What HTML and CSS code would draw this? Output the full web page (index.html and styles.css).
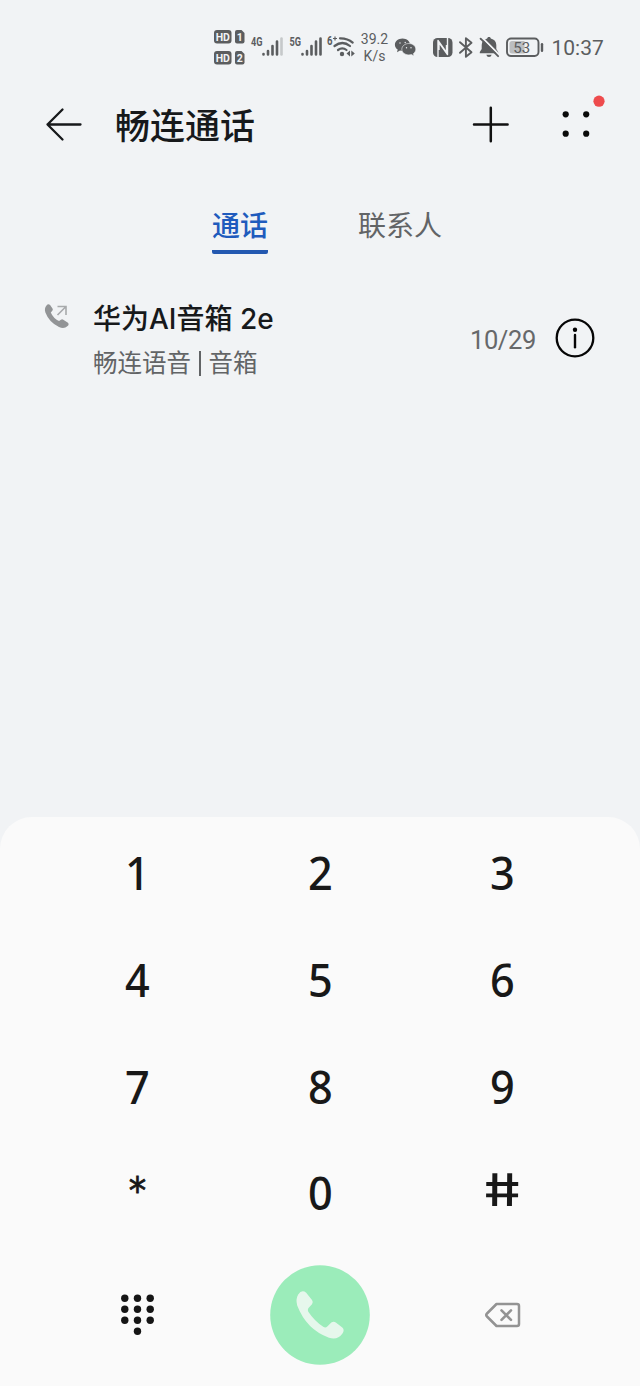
FILE: index.html
```html
<!DOCTYPE html>
<html lang="zh-CN">
<head>
<meta charset="utf-8">
<title>畅连通话</title>
<link rel="stylesheet" href="styles.css">
</head>
<body>
<div class="screen">
  <header class="status">
    <svg class="glyph" width="38" height="48" viewBox="210 24 38 48">
      <g fill="#5b5d5f">
        <rect x="214" y="30" width="17.500" height="13.500" rx="3"/>
        <path d="M237 30h4.500l3 3v8.500a2 2 0 0 1-2 2H237a2 2 0 0 1-2-2V32a2 2 0 0 1 2-2z"/>
        <rect x="214" y="51" width="17.500" height="13.500" rx="3"/>
        <path d="M237 51h4.500l3 3v8.500a2 2 0 0 1-2 2H237a2 2 0 0 1-2-2V53a2 2 0 0 1 2-2z"/>
      </g>
      <g class="tiny light">
        <text x="222.800" y="40.700">HD</text><text x="239.800" y="40.700">1</text>
        <text x="222.800" y="61.700">HD</text><text x="239.800" y="61.700">2</text>
      </g>
    </svg>
    <svg class="glyph" width="38" height="48" viewBox="248 24 38 48">
      <text class="net" x="251" y="46" textLength="11.500" lengthAdjust="spacingAndGlyphs">4G</text>
      <g stroke="#5b5d5f" stroke-width="2.600" stroke-linecap="round"><path d="M263.500 54v.5M268 51v3.500M272.500 46v8.500M277 41.500v13"/><path stroke="#c6c8ca" d="M281.500 38.500v16"/></g>
    </svg>
    <svg class="glyph" width="39" height="48" viewBox="286 24 39 48">
      <text class="net" x="289.500" y="46" textLength="11.500" lengthAdjust="spacingAndGlyphs">5G</text>
      <path stroke="#5b5d5f" stroke-width="2.600" stroke-linecap="round" d="M302.500 54v.5M307 51v3.500M311.500 46v8.500M316 41.500v13M320.500 38.500v16"/>
    </svg>
    <svg class="glyph" width="33" height="48" viewBox="325 24 33 48">
      <text class="net" x="327" y="45" textLength="5.500" lengthAdjust="spacingAndGlyphs">6</text>
      <path d="M333 38.500h4M335 36.500v4" stroke="#5b5d5f" stroke-width="1.200"/>
      <g fill="none" stroke="#5b5d5f" stroke-width="2.200" stroke-linecap="round"><path d="M340 38.300q7.500-.2 12.700 4.300M334.500 46q8-6 15.500 0M338 50q4.300-3.200 8.500 0"/></g>
      <circle cx="342" cy="54" r="2.200" fill="#5b5d5f"/>
      <path d="M350 50.500v6l-3.500-3zM351.300 50.500v6l3.500-3z" fill="#5b5d5f"/>
    </svg>
    <div class="speed"><span>39.2</span><span>K/s</span></div>
    <svg class="glyph" width="32" height="48" viewBox="391 24 32 48">
      <path fill="#5b5d5f" d="M402.500 38.500c4.300 0 7.500 2.800 7.500 6.200s-3.200 6.200-7.500 6.200c-.9 0-1.700-.1-2.500-.3l-3 1.700.7-2.700c-1.700-1.200-2.800-2.900-2.800-4.900 0-3.400 3.300-6.200 7.600-6.200z"/>
      <path fill="#5b5d5f" stroke="#f1f3f5" stroke-width=".6" d="M408.800 43.500c4.200 0 7 2.600 7 5.700 0 1.800-1 3.300-2.400 4.400l.6 2.300-2.600-1.400c-.8.200-1.700.4-2.600.4-3.900 0-7-2.600-7-5.700s3.100-5.700 7-5.700z"/>
      <g fill="#f1f3f5"><circle cx="400" cy="43" r=".7"/><circle cx="405.200" cy="42.500" r=".7"/><circle cx="406.500" cy="47.700" r=".7"/><circle cx="411" cy="47.700" r=".7"/></g>
    </svg>
    <svg class="glyph" width="32" height="48" viewBox="423 24 32 48">
      <rect x="433" y="38" width="19.500" height="19" rx="4.500" fill="#5b5d5f"/>
      <g fill="none" stroke="#f1f3f5" stroke-width="1.400" stroke-linejoin="round"><path d="M438 57V40.500l8.500 12v-7.500M447.500 38v16.500l-8.500-12v7.500"/></g>
    </svg>
    <svg class="glyph" width="21" height="48" viewBox="455 24 21 48">
      <path d="M460 42.200l11.500 10-5.600 4.600V38.200l5.600 4.600-11.500 10" fill="none" stroke="#5b5d5f" stroke-width="1.900" stroke-linejoin="round" stroke-linecap="round"/>
    </svg>
    <svg class="glyph" width="27" height="48" viewBox="476 24 27 48">
      <path fill="#5b5d5f" d="M489 37c1.200 0 1.700.7 1.800 1.400 3.500.8 5.500 3.300 5.500 6.600v4l1.900 3v1.200h-18.400V52l1.900-3v-4c0-3.300 2-5.800 5.500-6.600.1-.7.600-1.400 1.800-1.400zM486.300 54.800h5.400q-.6 2.200-2.700 2.200t-2.700-2.200z"/>
      <path d="M482 37.500L499.500 55" stroke="#f1f3f5" stroke-width="1.800"/><path d="M480.600 38.700l17.500 17.500" stroke="#5b5d5f" stroke-width="1.900" stroke-linecap="round"/>
    </svg>
    <svg class="glyph" width="45" height="48" viewBox="503 24 45 48">
      <rect x="507" y="38.500" width="31.500" height="17.500" rx="4" fill="none" stroke="#5b5d5f" stroke-width="1.900"/>
      <path d="M512 41h12.500v12.500H512a2.500 2.500 0 0 1-2.500-2.500v-7.500a2.500 2.500 0 0 1 2.500-2.500z" fill="#bcbec0"/>
      <path d="M542 44.200v6.500" stroke="#5b5d5f" stroke-width="2.400" stroke-linecap="round"/>
      <text class="battery" x="521.800" y="52.700">53</text>
    </svg>
    <time class="clock">10:37</time>
  </header>

  <nav class="appbar">
    <svg class="back" width="38" height="36" viewBox="45 106 38 36"><path d="M62.500 109.500L47.500 124.500l15 15M47.500 124.500H80.500" fill="none" stroke="#17191b" stroke-width="2.300" stroke-linecap="round" stroke-linejoin="round"/></svg>
    <h1 class="title">畅连通话</h1>
    <svg class="add" width="40" height="40" viewBox="471 104 40 40"><path d="M490.800 107.700v33.600M474 124.500h33.600" stroke="#111" stroke-width="2.500" stroke-linecap="round"/></svg>
    <svg class="more" width="50" height="52" viewBox="558 92 50 52"><g fill="#0a0a0a"><circle cx="565.700" cy="114.300" r="3.100"/><circle cx="586.200" cy="114.300" r="3.100"/><circle cx="565.700" cy="133.700" r="3.100"/><circle cx="586.200" cy="133.700" r="3.100"/></g><circle cx="599" cy="101.200" r="5.600" fill="#ee4b4d"/></svg>
  </nav>

  <div class="tabs">
    <span class="tab active">通话</span>
    <span class="tab">联系人</span>
  </div>

  <main class="log">
    <div class="entry">
      <svg class="outgoing" width="28" height="28" viewBox="43 302 28 28">
        <path fill="#929496" d="M46.500 305.500q1.700-2.300 3.600-.4l2.400 3.300q.8 1.300-.2 2.300l-1.500 1.700q2.400 5.700 8.300 8.700l1.800-1.300q1.200-.9 2.400 0l4.300 2.600q2 1.600 0 3.600-3.600 3.300-8.600.9-9.800-4.400-13.600-14.400-1.400-4.200 1.100-7z"/>
        <path d="M57.500 315l8.500-8.500M57.500 306.500h8.500v8.500" fill="none" stroke="#a8aaac" stroke-width="1.600"/>
      </svg>
      <div class="who">
        <div class="name">华为AI音箱 2e</div>
        <div class="kind"><span>畅连语音</span><i class="bar"></i><span>音箱</span></div>
      </div>
      <span class="date">10/29</span>
      <svg class="info" width="42" height="42" viewBox="0 0 42 42"><circle cx="21" cy="21" r="18.300" fill="none" stroke="#060606" stroke-width="2.300"/><circle cx="21" cy="12.700" r="2.200"/><path d="M21 18v12.200" stroke="#060606" stroke-width="2.400" stroke-linecap="round"/></svg>
    </div>
  </main>

  <section class="dialer">
    <div class="keys">
      <span>1</span><span>2</span><span>3</span>
      <span>4</span><span>5</span><span>6</span>
      <span>7</span><span>8</span><span>9</span>
      <span><b class="star">*</b></span><span>0</span><span><b class="hash">#</b></span>
    </div>
    <div class="actions">
      <svg class="pad" width="36" height="42" viewBox="120 1293 36 42"><g fill="#151515"><circle cx="124.800" cy="1298.300" r="3.700"/><circle cx="137.500" cy="1298.300" r="3.700"/><circle cx="150.200" cy="1298.300" r="3.700"/><circle cx="124.800" cy="1309.300" r="3.700"/><circle cx="137.500" cy="1309.300" r="3.700"/><circle cx="150.200" cy="1309.300" r="3.700"/><circle cx="124.800" cy="1320.300" r="3.700"/><circle cx="137.500" cy="1320.300" r="3.700"/><circle cx="150.200" cy="1320.300" r="3.700"/><circle cx="137.500" cy="1331.300" r="3.700"/></g></svg>
      <svg width="100" height="100" viewBox="270 1265 100 100"><circle cx="320" cy="1315" r="49.800" fill="#9becba"/><path fill="#e6f7ec" d="M298.200 1294.500q3.500-5.500 8-1.800l5.800 7.300q1.700 2.300 0 4.300l-3.700 4q-1 1.500 0 3.500 6.500 9.700 15.300 15.300 2 .9 3.700-.5l4-4q2.200-1.700 4.500-.2l6.500 5q2.700 2.400 0 6.300-4.700 6.500-13.300 4-22.500-8-31.800-32.200-1.700-6.500 1-11z"/></svg>
      <svg width="40" height="30" viewBox="483 1300 40 30"><g fill="none" stroke="#939393" stroke-linejoin="round" stroke-linecap="round"><path d="M496.500 1304H517a2 2 0 0 1 2 2v18a2 2 0 0 1-2 2H496.500L487 1316.500q-1.500-1.500 0-3z" stroke-width="2.500"/><path d="M501.500 1310.300l9.500 9.500M511 1310.300l-9.500 9.500" stroke-width="2.600"/></g></svg>
    </div>
  </section>
</div>
</body>
</html>
```
FILE: styles.css
```css
* { box-sizing: border-box; }
body { margin: 0; background: #f1f3f5; font-family: Roboto, "Noto Sans CJK SC", sans-serif; color: #17191b; }
svg { display: block; flex: none; }
.screen { width: 640px; height: 1386px; display: flex; flex-direction: column; overflow: hidden; }

.status { display: flex; height: 72px; padding: 24px 0 0 210px; color: #5b5d5f; flex: none; }
.tiny { font-size: 10.5px; font-weight: 700; text-anchor: middle; }
.light { fill: #f1f3f5; }
.net { font-size: 12px; font-weight: 700; fill: #5b5d5f; }
.battery { font-size: 15px; fill: #5b5d5f; text-anchor: middle; }
.speed { width: 33px; display: flex; flex-direction: column; align-items: center; padding-top: 7px; font-size: 14px; line-height: 16.500px; }
.clock { font-size: 21px; line-height: 48px; margin-left: 3.500px; }

.appbar { display: flex; align-items: center; height: 104px; padding-left: 45px; flex: none; }
.title { margin: 8px 0 0 32px; width: 356px; font-size: 35px; line-height: 48px; font-weight: 500; }
.more { margin: 0 0 12px 47px; }

.tabs { display: flex; height: 84px; padding: 30px 0 0 212px; gap: 90px; font-size: 28px; line-height: 42px; color: #626466; flex: none; }
.tab { height: 48px; }
.active { color: #1f5bbd; font-weight: 500; border-bottom: 4px solid #2358b0; border-radius: 2px; }

.log { flex: 1; padding: 37px 44px 0 43px; }
.entry { display: flex; align-items: flex-start; }
.outgoing { margin-top: 5px; }
.who { margin-left: 22px; width: 379px; padding-top: 1px; }
.name { font-family: Inter, "Noto Sans CJK SC", sans-serif; font-size: 28px; line-height: 42px; font-weight: 500; }
.kind { display: flex; align-items: center; font-size: 24.500px; line-height: 36px; color: #626466; margin-top: 6px; }
.bar { width: 1.500px; height: 25px; background: #626466; margin: 0 8px 2px 8px; }
.date { width: 65px; font-size: 25.500px; letter-spacing: -.4px; line-height: 42px; color: #66686a; margin: 22px 0 0 1px; }
.info { margin: 20px 0 0 19px; }

.dialer { height: 569px; background: #fafafa; border-radius: 32px 32px 0 0; padding: 2px 46px 0; flex: none; }
.keys { display: grid; grid-template-columns: repeat(3, 1fr); grid-auto-rows: 106.660px; font-family: "Noto Sans", sans-serif; font-size: 46px; line-height: 54px; font-weight: 500; color: #181818; }
.keys span { display: flex; align-items: center; justify-content: center; transform: scaleX(.940); }
.keys b { font-weight: 500; }
.star { font-family: "DejaVu Sans", sans-serif; font-size: 37px; line-height: 52px; -webkit-text-stroke: .8px #181818; }
.hash { font-family: Inter, sans-serif; font-size: 45px; line-height: 52px; margin-bottom: 4px; transform: scaleX(1.370) skewX(9deg); }
.actions { display: grid; grid-template-columns: repeat(3, 1fr); align-items: center; justify-items: center; height: 100px; margin-top: 19px; }
.pad { margin: 0 0 2px 1px; }
```
